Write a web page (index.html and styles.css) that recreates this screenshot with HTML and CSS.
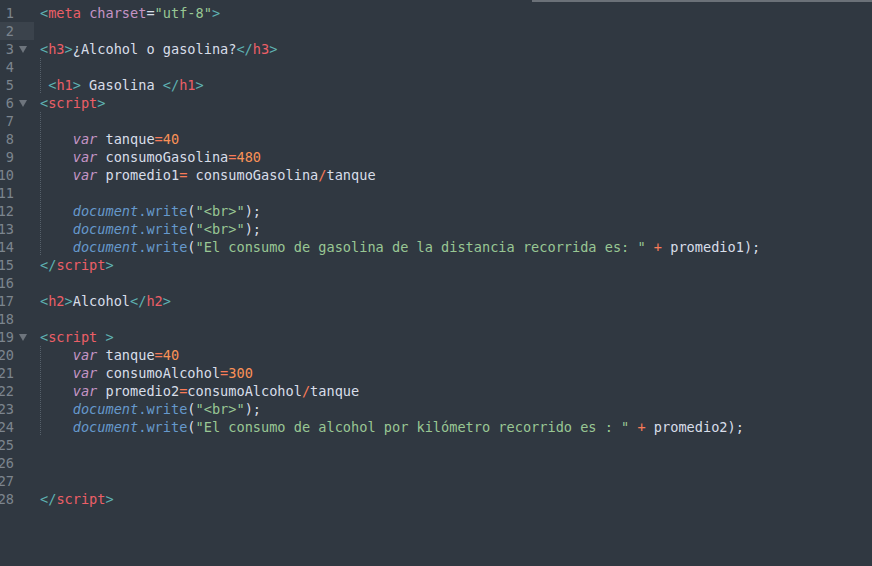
FILE: index.html
```html
<!DOCTYPE html>
<html lang="es">
<head>
    <meta charset="UTF-8">
    <meta name="viewport" content="width=device-width, initial-scale=1.0">
    <title>index.html</title>
    <link rel="stylesheet" href="styles.css">
</head>
<body>
    <div class="tabline"></div>
    <div class="editor">
        <div class="line"><div class="gutter"><span class="num">1</span></div><div class="code"><span class="br">&lt;</span><span class="tag">meta</span> <span class="attr">charset</span><span class="pl">=</span><span class="str">"utf-8"</span><span class="br">&gt;</span></div></div>
        <div class="line active"><div class="gutter"><span class="num">2</span></div><div class="code"></div></div>
        <div class="line"><div class="gutter"><span class="num">3</span><span class="fold"></span></div><div class="code"><span class="br">&lt;</span><span class="tag">h3</span><span class="br">&gt;</span>¿Alcohol o gasolina?<span class="br">&lt;/</span><span class="tag">h3</span><span class="br">&gt;</span></div></div>
        <div class="line"><div class="gutter"><span class="num">4</span></div><div class="code guide"></div></div>
        <div class="line"><div class="gutter"><span class="num">5</span></div><div class="code guide"> <span class="br">&lt;</span><span class="tag">h1</span><span class="br">&gt;</span> Gasolina <span class="br">&lt;/</span><span class="tag">h1</span><span class="br">&gt;</span></div></div>
        <div class="line"><div class="gutter"><span class="num">6</span><span class="fold"></span></div><div class="code"><span class="br">&lt;</span><span class="tag">script</span><span class="br">&gt;</span></div></div>
        <div class="line"><div class="gutter"><span class="num">7</span></div><div class="code guide"></div></div>
        <div class="line"><div class="gutter"><span class="num">8</span></div><div class="code guide">    <span class="kw">var</span> tanque<span class="op">=</span><span class="nb">40</span></div></div>
        <div class="line"><div class="gutter"><span class="num">9</span></div><div class="code guide">    <span class="kw">var</span> consumoGasolina<span class="op">=</span><span class="nb">480</span></div></div>
        <div class="line"><div class="gutter"><span class="num">10</span></div><div class="code guide">    <span class="kw">var</span> promedio1<span class="op">=</span> consumoGasolina<span class="op">/</span>tanque</div></div>
        <div class="line"><div class="gutter"><span class="num">11</span></div><div class="code guide"></div></div>
        <div class="line"><div class="gutter"><span class="num">12</span></div><div class="code guide">    <span class="obj">document</span><span class="fn">.write</span>(<span class="str">"&lt;br&gt;"</span>);</div></div>
        <div class="line"><div class="gutter"><span class="num">13</span></div><div class="code guide">    <span class="obj">document</span><span class="fn">.write</span>(<span class="str">"&lt;br&gt;"</span>);</div></div>
        <div class="line"><div class="gutter"><span class="num">14</span></div><div class="code guide">    <span class="obj">document</span><span class="fn">.write</span>(<span class="str">"El consumo de gasolina de la distancia recorrida es: "</span> <span class="op">+</span> promedio1);</div></div>
        <div class="line"><div class="gutter"><span class="num">15</span></div><div class="code"><span class="br">&lt;/</span><span class="tag">script</span><span class="br">&gt;</span></div></div>
        <div class="line"><div class="gutter"><span class="num">16</span></div><div class="code"></div></div>
        <div class="line"><div class="gutter"><span class="num">17</span></div><div class="code"><span class="br">&lt;</span><span class="tag">h2</span><span class="br">&gt;</span>Alcohol<span class="br">&lt;/</span><span class="tag">h2</span><span class="br">&gt;</span></div></div>
        <div class="line"><div class="gutter"><span class="num">18</span></div><div class="code"></div></div>
        <div class="line"><div class="gutter"><span class="num">19</span><span class="fold"></span></div><div class="code"><span class="br">&lt;</span><span class="tag">script</span> <span class="br">&gt;</span></div></div>
        <div class="line"><div class="gutter"><span class="num">20</span></div><div class="code guide">    <span class="kw">var</span> tanque<span class="op">=</span><span class="nb">40</span></div></div>
        <div class="line"><div class="gutter"><span class="num">21</span></div><div class="code guide">    <span class="kw">var</span> consumoAlcohol<span class="op">=</span><span class="nb">300</span></div></div>
        <div class="line"><div class="gutter"><span class="num">22</span></div><div class="code guide">    <span class="kw">var</span> promedio2<span class="op">=</span>consumoAlcohol<span class="op">/</span>tanque</div></div>
        <div class="line"><div class="gutter"><span class="num">23</span></div><div class="code guide">    <span class="obj">document</span><span class="fn">.write</span>(<span class="str">"&lt;br&gt;"</span>);</div></div>
        <div class="line"><div class="gutter"><span class="num">24</span></div><div class="code guide">    <span class="obj">document</span><span class="fn">.write</span>(<span class="str">"El consumo de alcohol por kilómetro recorrido es : "</span> <span class="op">+</span> promedio2);</div></div>
        <div class="line"><div class="gutter"><span class="num">25</span></div><div class="code"></div></div>
        <div class="line"><div class="gutter"><span class="num">26</span></div><div class="code"></div></div>
        <div class="line"><div class="gutter"><span class="num">27</span></div><div class="code"></div></div>
        <div class="line"><div class="gutter"><span class="num">28</span></div><div class="code"><span class="br">&lt;/</span><span class="tag">script</span><span class="br">&gt;</span></div></div>
    </div>
</body>
</html>
```

FILE: styles.css
```css
body {
    margin: 0;
    background: #303841;
    height: 566px;
    overflow: hidden;
    font-family: "DejaVu Sans Mono", "Liberation Mono", monospace;
    font-size: 13.6px;
    color: #d8dee9;
}

/* thin strip of the tab bar at the very top */
.tabline {
    height: 2px;
    margin-left: 532px;
    background: #6b7178;
}

.editor {
    padding-top: 2px;
}

.line {
    display: flex;
    height: 18px;
    line-height: 18px;
}

.gutter {
    width: 34px;
    flex: none;
    display: flex;
    align-items: center;
}

.line.active .gutter {
    background: #3b434c;
}

.num {
    width: 14px;
    display: flex;
    justify-content: flex-end;
    color: #7c858e;
}

.fold {
    margin-left: 5px;
    width: 0;
    height: 0;
    border-left: 4px solid transparent;
    border-right: 4px solid transparent;
    border-top: 7px solid #6e757d;
}

.code {
    margin-left: 6px;
    flex: 1;
    white-space: pre;
}

.code.guide {
    background: linear-gradient(#56606a 50%, transparent 0) 0 0 / 1px 2px repeat-y;
}

.br { color: #5fb3b3; }
.tag { color: #ec5f67; }
.attr { color: #c594c5; }
.str { color: #99c794; }
.nb { color: #f99157; }
.op { color: #f97b58; }
.kw { color: #c594c5; font-style: italic; }
.obj { color: #6699cc; font-style: italic; }
.fn { color: #6699cc; }
.pl { color: #d8dee9; }
```
